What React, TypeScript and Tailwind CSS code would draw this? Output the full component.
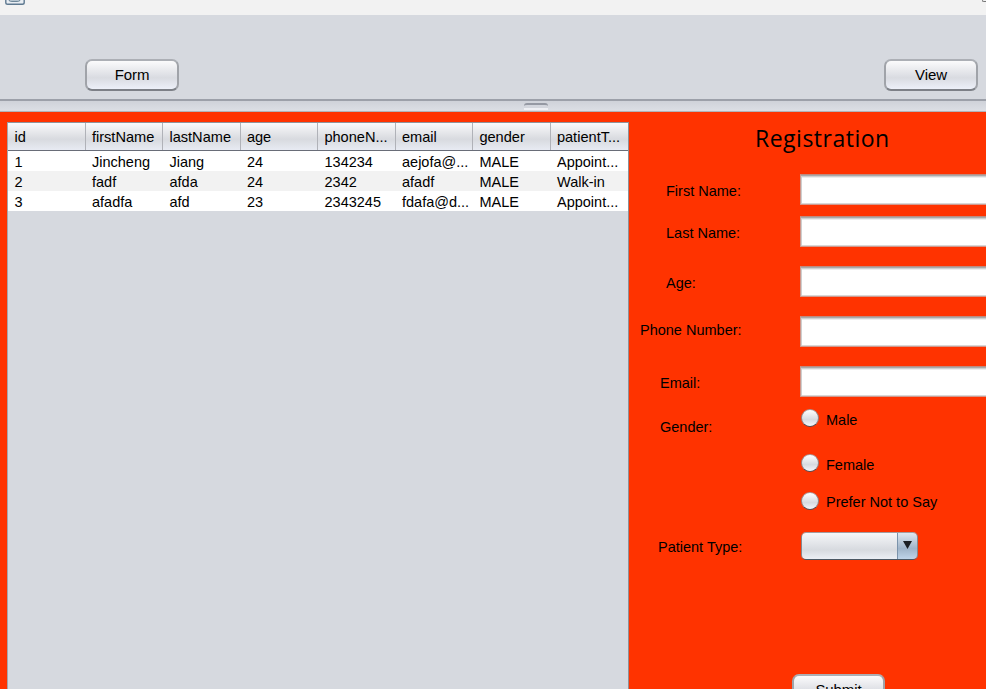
import type { ReactNode } from "react";

const columns = ["id", "firstName", "lastName", "age", "phoneN...", "email", "gender", "patientT..."];
const patients = [
  ["1", "Jincheng", "Jiang", "24", "134234", "aejofa@...", "MALE", "Appoint..."],
  ["2", "fadf", "afda", "24", "2342", "afadf", "MALE", "Walk-in"],
  ["3", "afadfa", "afd", "23", "2343245", "fdafa@d...", "MALE", "Appoint..."],
];

const fields = [
  { label: "First Name:", row: "h-[42px]", text: "pl-[37px] pt-[7px]" },
  { label: "Last Name:", row: "h-[50px]", text: "pl-[37px] pt-[7px]" },
  { label: "Age:", row: "h-[50px]", text: "pl-[37px] pt-[7px]" },
  { label: "Phone Number:", row: "h-[50px]", text: "pl-[11px] pt-[4px]" },
  { label: "Email:", row: "h-[43px]", text: "pl-[31px] pt-[7px]" },
];

const genders = [
  { label: "Male", row: "h-[45px]", radio: "" },
  { label: "Female", row: "h-[37px]", radio: "" },
  { label: "Prefer Not to Say", row: "h-[40px]", radio: "mt-px" },
];

function Button({ children, className = "" }: { children: ReactNode; className?: string }) {
  return (
    <button
      className={`flex shrink-0 items-center justify-center rounded-[7px] border-2 border-x-[#a0a3a9] border-t-[#acafb5] border-b-[#7d8087] bg-linear-to-b from-[#fbfbfc] via-[#d9dbe1] via-60% to-[#edf0f9] pt-px text-[15px] tracking-[-0.1px] ${className}`}
    >
      {children}
    </button>
  );
}

function PatientTable() {
  return (
    <section className="mt-[10px] ml-[7px] flex w-[622px] shrink-0 flex-col border-t border-r border-l border-t-[#8f939c] border-r-[#8f9096] border-l-[#a5a6ab] bg-[#d6d9df]">
      <div className="grid h-[28px] shrink-0 grid-cols-8 border-b border-[#696d78] bg-linear-to-b from-[#fafafb] via-[#d8dadf] via-60% to-[#e8ebf3]">
        {columns.map((name) => (
          <div key={name} className="overflow-hidden border-r border-[#b0b2b8] pl-[6.4px] leading-[28px] whitespace-nowrap text-[14.6px] last:border-r-0">
            {name}
          </div>
        ))}
      </div>
      {patients.map((patient) => (
        <div key={patient[0]} className="grid h-[20px] shrink-0 grid-cols-8 even:bg-white odd:bg-[#f2f2f2]">
          {patient.map((value, index) => (
            <div key={index} className="overflow-hidden pl-[6.5px] leading-[22px] whitespace-nowrap">
              {value}
            </div>
          ))}
        </div>
      ))}
    </section>
  );
}

function RegistrationForm() {
  return (
    <section className="flex w-[380px] shrink-0 flex-col overflow-hidden">
      <h1 className="h-[62px] shrink-0 pt-[9px] pl-[126px] font-['Open_Sans','Noto_Sans',sans-serif] text-[23px] leading-[34px] tracking-[0.5px]">
        Registration
      </h1>
      {fields.map((field) => (
        <label key={field.label} className={`flex shrink-0 items-start ${field.row}`}>
          <span className={`w-[171px] shrink-0 leading-5 ${field.text}`}>{field.label}</span>
          <input className="h-[31px] w-[240px] shrink-0 border border-x-[#d0968a] border-t-[#c08a7e] border-b-[#d3998d] bg-white shadow-[inset_0_1px_0_#a9a9a9,inset_1px_2px_0_#cfcfcf,inset_0_3px_0_#ededed,inset_0_-1px_0_#d8d8d8] outline-none" />
        </label>
      ))}
      <div className="flex h-[123px] shrink-0">
        <span className="w-[171px] shrink-0 pt-[8px] pl-[31px] leading-5">Gender:</span>
        <div className="flex flex-col">
          {genders.map((gender) => (
            <label key={gender.label} className={`flex shrink-0 items-start ${gender.row}`}>
              <span className={`ml-px size-[18px] rounded-full border border-x-[#8f8588] border-t-[#a79c9e] border-b-[#4c5058] bg-linear-to-b from-white via-[#d7dadf] via-60% to-[#f4f6fb] ${gender.radio}`} />
              <span className="pl-[7px] leading-[22px]">{gender.label}</span>
            </label>
          ))}
        </div>
      </div>
      <div className="flex h-[142px] shrink-0 items-start">
        <span className="w-[172px] shrink-0 pt-[5px] pl-[29px] leading-5">Patient Type:</span>
        <div className="flex h-[28px] w-[117px] overflow-hidden rounded-[5px] border border-x-[#85888f] border-t-[#a39b9f] border-b-[#4b5763]">
          <div className="flex-1 bg-linear-to-b from-[#f6f7f9] via-[#d7dadf] via-65% to-[#eceff5]" />
          <div className="flex w-[20px] justify-center border-l border-[#7b93ab] bg-linear-to-b from-[#dfe7ef] via-[#9fb4c9] via-60% to-[#bfd4e9] pt-[8px]">
            <svg width="9" height="8" viewBox="0 0 9 8">
              <path d="M0 0H9L4.5 8Z" fill="#1c1f23" />
            </svg>
          </div>
        </div>
      </div>
      <Button className="ml-[163px] h-[31px] w-[93px]">Submit</Button>
    </section>
  );
}

export default function App() {
  return (
    <div className="flex h-[689px] w-[986px] flex-col overflow-hidden bg-[#d6d9df] font-['Liberation_Sans',Arial,sans-serif] text-[14.5px] text-black">
      <header className="flex h-[15px] shrink-0 items-start justify-between overflow-hidden bg-[#f2f2f2] pl-[5px]">
        <svg width="20" height="5" viewBox="0 0 20 5">
          <path d="M.8 0V2.5Q.8 4.3 2.6 4.3H17.4Q19.2 4.3 19.2 2.5V0" fill="#e8edf2" stroke="#5e7990" strokeWidth="1.4" />
          <path d="M4 0Q4.5 1.4 7 1.4H12Q14.5 1.4 15 0" fill="#cbd6df" stroke="#6e8799" strokeWidth="1.1" />
        </svg>
        <div className="h-[2px] w-[4px] rounded-bl-[2px] border-b border-l border-[#777]" />
      </header>
      <nav className="flex h-[84px] shrink-0 items-start justify-between pt-[44px] pr-[8px] pl-[85px]">
        <Button className="h-[32px] w-[94px]">Form</Button>
        <Button className="h-[32px] w-[94px]">View</Button>
      </nav>
      <div className="flex h-[13px] shrink-0 justify-center border-t-2 border-b border-t-[#9ca0a9] border-b-[#b2b3b7] bg-linear-to-b from-[#cfd2d9] to-[#dcdfe5] pl-[86px]">
        <div className="mt-[2px] h-[7px] w-[24px] rounded-t-[3px] border-t-2 border-b-2 border-t-[#9599a3] border-b-[#eff0f4] bg-[#d3d6dd]" />
      </div>
      <main className="flex min-h-0 flex-1 bg-[#ff3300]">
        <PatientTable />
        <RegistrationForm />
      </main>
    </div>
  );
}
